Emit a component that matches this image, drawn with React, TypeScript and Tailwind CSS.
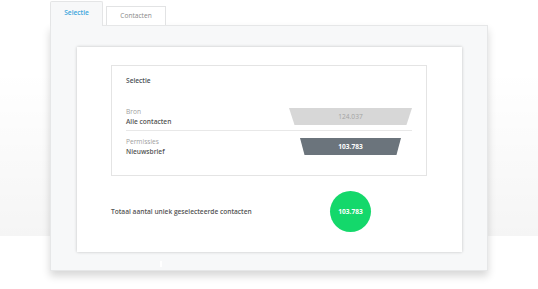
import React from 'react';

const rows = [
  { label: 'Bron', value: 'Alle contacten', count: '124.037', bar: 'w-[123px] bg-[#d7d7d7] text-[#a3a3a3] font-normal' },
  { label: 'Permissies', value: 'Nieuwsbrief', count: '103.783', bar: 'w-[101px] bg-[#6b747c] text-white font-bold' },
];

const App = () => {
  return (
    <div
      className="relative w-[538px] h-[289px] overflow-hidden bg-white pt-[1px] pl-[50px] text-[6.6px] text-[#555]"
      style={{ fontFamily: '"Open Sans", "Liberation Sans", sans-serif' }}
    >
      {/* soft backdrop shadow behind the panel */}
      <div className="absolute left-0 right-0 top-[70px] h-[166px] bg-[linear-gradient(to_bottom,rgba(255,255,255,0),rgba(0,0,0,0.04))]" />

      <div className="relative">
        {/* Tabs */}
        <div className="flex items-end h-[24px]">
          <div className="relative z-10 w-[53px] h-[25px] -mb-[1px] bg-[#f7f8f9] border border-b-0 border-[#e4e5e6] rounded-t-[2px] flex justify-center pt-[6px] font-semibold text-[#3ba5dc]">
            Selectie
          </div>
          <div className="ml-[3px] w-[60px] h-[19px] bg-white border border-b-0 border-[#e2e3e4] flex justify-center pt-[4px] text-[#888]">
            Contacten
          </div>
        </div>

        {/* Panel */}
        <div className="w-[438px] h-[246px] bg-[#f7f8f9] border border-[#e6e7e8] pt-[21px] pl-[26px] shadow-[0_5px_8px_rgba(0,0,0,0.16)]">
          <div className="w-[385px] h-[205px] bg-white shadow-[0_0_3px_rgba(0,0,0,0.22)] pt-[18px] pl-[34px]">
            {/* Selection box */}
            <div className="w-[316px] h-[111px] border border-[#e4e4e4] px-[14px] pt-[10px]">
              <div className="font-semibold text-[#4a4f55] leading-[10px]">Selectie</div>
              <div className="mt-[19px]">
                {rows.map((row, i) => (
                  <div
                    key={row.label}
                    className={`flex items-center justify-between h-[26px] ${i === 0 ? 'border-b border-[#e8e8e8] pb-[2px]' : 'pt-[5px]'}`}
                  >
                    <div className="leading-[10px]">
                      <div className="text-[#a0a0a0]">{row.label}</div>
                      <div className="font-semibold text-[#555]">{row.value}</div>
                    </div>
                    <div className="w-[123px] flex justify-center">
                      <div
                        className={`${row.bar} h-[17px] flex items-center justify-center [clip-path:polygon(0_0,100%_0,95.5%_100%,4.5%_100%)]`}
                      >
                        {row.count}
                      </div>
                    </div>
                  </div>
                ))}
              </div>
            </div>

            {/* Total */}
            <div className="w-[301px] flex items-center justify-between mt-[15px]">
              <div className="font-semibold text-[#555]">Totaal aantal uniek geselecteerde contacten</div>
              <div className="w-[123px] flex justify-center">
                <div className="w-[41px] h-[41px] rounded-full bg-[#14d86b] flex items-center justify-center text-white font-bold">
                  103.783
                </div>
              </div>
            </div>
          </div>
          <div className="ml-[83px] mt-[9px] w-[2px] h-[6px] bg-white" />
        </div>
      </div>
    </div>
  );
};

export default App;
